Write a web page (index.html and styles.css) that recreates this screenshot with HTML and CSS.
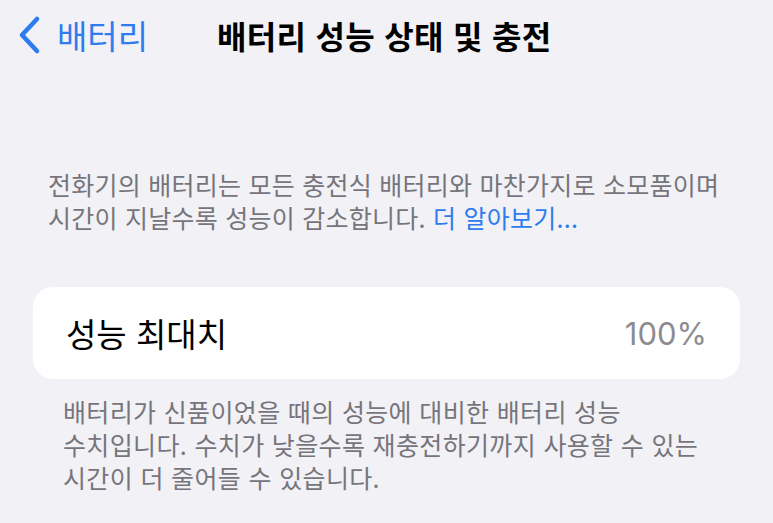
FILE: index.html
```html
<!DOCTYPE html>
<html lang="ko">
<head>
    <meta charset="UTF-8">
    <title>배터리 성능 상태 및 충전</title>
    <link rel="stylesheet" href="styles.css">
</head>
<body>
<div class="nav">
    <a class="back" href="#">
        <svg class="chevron" width="26" height="40" viewBox="0 0 26 40">
            <path d="M21 4 L6 20 L21 36" fill="none" stroke="#2f7cf0" stroke-width="4.6" stroke-linecap="round" stroke-linejoin="round"/>
        </svg>
        <span>배터리</span>
    </a>
    <h1 class="title">배터리 성능 상태 및 충전</h1>
</div>
<p class="desc">전화기의 배터리는 모든 충전식 배터리와 마찬가지로 소모품이며 시간이 지날수록 성능이 감소합니다. <a href="#">더 알아보기...</a></p>
<div class="card">
    <span class="label">성능 최대치</span>
    <span class="value">100%</span>
</div>
<p class="foot">배터리가 신품이었을 때의 성능에 대비한 배터리 성능 수치입니다. 수치가 낮을수록 재충전하기까지 사용할 수 있는 시간이 더 줄어들 수 있습니다.</p>
</body>
</html>
```
FILE: styles.css
```css
*{
    margin: 0;
    padding: 0;
}
body{
    background: #f2f1f6;
    font-family: "Noto Sans CJK KR", "Noto Sans", sans-serif;
    color: #000;
    word-break: keep-all;
}
a{
    text-decoration: none;
}
.nav{
    height: 70px;
    display: flex;
    align-items: center;
    padding-left: 16px;
}
.back{
    display: flex;
    align-items: center;
    color: #2f7cf0;
    font-size: 33px;
    width: 201px;
}
.back span{
    margin-left: 15px;
    line-height: 40px;
}
.title{
    font-size: 32px;
    font-weight: 700;
    line-height: 40px;
    letter-spacing: 0.3px;
}
.desc{
    margin-top: 98px;
    padding: 0 40px 0 48px;
    font-size: 25px;
    line-height: 33px;
    letter-spacing: 0.25px;
    color: #76757b;
}
.desc a{
    color: #2f7cf0;
}
.card{
    margin: 53px 33px 0;
    height: 92px;
    background: #fff;
    border-radius: 20px;
    display: flex;
    align-items: center;
    justify-content: space-between;
    padding: 0 33px;
}
.label{
    font-size: 33px;
}
.value{
    font-family: Inter, "Noto Sans", sans-serif;
    font-size: 31px;
    color: #8c8b90;
}
.foot{
    margin-top: 16px;
    padding: 0 50px 0 63px;
    font-size: 25px;
    line-height: 33px;
    letter-spacing: 0.35px;
    color: #76757b;
}
```
